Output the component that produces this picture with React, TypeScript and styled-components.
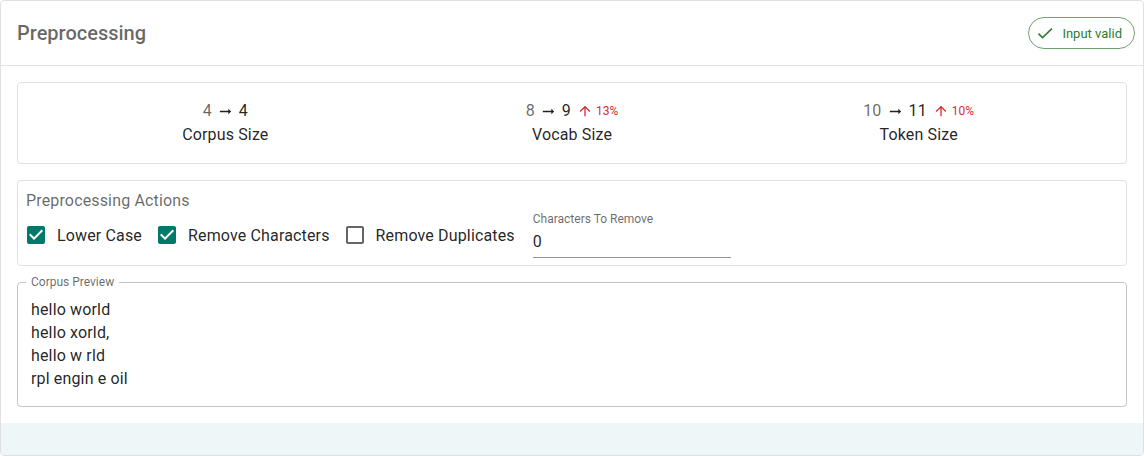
import styled, { createGlobalStyle } from 'styled-components'

const GlobalStyle = createGlobalStyle`
  html, body {
    margin: 0;
    padding: 0;
    background: #fff;
  }
  body {
    font-family: Roboto, "Liberation Sans", Arial, sans-serif;
    color: rgba(0, 0, 0, 0.87);
  }
`

const Panel = styled.div`
  box-sizing: border-box;
  width: 1144px;
  height: 456px;
  border: 1px solid #e0e0e0;
  border-radius: 4px;
  display: flex;
  flex-direction: column;
  overflow: hidden;
`

const Header = styled.div`
  height: 65px;
  box-sizing: border-box;
  padding: 16px 8px 16px 16px;
  display: flex;
  align-items: center;
  justify-content: space-between;
  border-bottom: 1px solid #e0e0e0;
`

const Title = styled.h2`
  margin: 0;
  font-size: 20px;
  font-weight: 500;
  line-height: 32px;
  color: rgba(0, 0, 0, 0.6);
`

const Chip = styled.div`
  height: 32px;
  box-sizing: border-box;
  border: 1px solid rgba(46, 125, 50, 0.7);
  border-radius: 16px;
  display: flex;
  align-items: center;
  padding: 0 12px 0 6px;
  gap: 7px;
  color: #2e7d32;
  font-size: 13px;
`

const Body = styled.div`
  padding: 16px;
  display: flex;
  flex-direction: column;
  gap: 16px;
  letter-spacing: 0.15px;
`

const Card = styled.div`
  border: 1px solid #e0e0e0;
  border-radius: 4px;
`

const StatsGrid = styled(Card)`
  display: grid;
  grid-template-columns: repeat(3, 1fr);
  padding: 16px 34px;
`

const Stat = styled.div`
  display: flex;
  flex-direction: column;
  align-items: center;
  font-size: 16px;
  line-height: 24px;
`

const StatValues = styled.div`
  display: flex;
  align-items: center;
  gap: 5px;
`

const Prev = styled.span`
  color: rgba(0, 0, 0, 0.6);
`

const Change = styled.span`
  display: inline-flex;
  align-items: center;
  gap: 3px;
  color: #d32f2f;
  font-size: 12px;
  letter-spacing: 0;
  margin-left: 1px;
`

const Actions = styled(Card)`
  padding: 8px;
  display: flex;
  flex-direction: column;
`

const SectionTitle = styled.div`
  font-size: 16px;
  line-height: 24px;
  color: rgba(0, 0, 0, 0.6);
`

const ActionRow = styled.div`
  display: flex;
  align-items: center;
  height: 44px;
`

const CheckLabel = styled.label`
  display: inline-flex;
  align-items: center;
  gap: 9px;
  margin-left: -2px;
  margin-right: 15px;
  font-size: 16px;
`

const TextField = styled.div`
  width: 198px;
  display: flex;
  flex-direction: column;
  align-self: flex-start;
  margin-top: -1px;
  margin-left: 3px;
  letter-spacing: 0;
`

const FieldLabel = styled.span`
  font-size: 12px;
  line-height: 14px;
  color: rgba(0, 0, 0, 0.6);
`

const FieldInput = styled.div`
  font-size: 16px;
  line-height: 23px;
  padding: 3.5px 0 4px;
  border-bottom: 1px solid rgba(0, 0, 0, 0.42);
`

const Preview = styled.div`
  position: relative;
  border: 1px solid #c4c4c4;
  border-radius: 4px;
  padding: 14.5px 13px 16.5px;
  font-size: 16px;
  line-height: 23px;
`

const PreviewLegend = styled.span`
  position: absolute;
  top: -8px;
  left: 8px;
  padding: 0 5px;
  background: #fff;
  font-size: 12px;
  line-height: 14px;
  letter-spacing: 0;
  color: rgba(0, 0, 0, 0.6);
`

const Footer = styled.div`
  flex: 1;
  background: #eef6f7;
`

const CheckIcon = () => (
  <svg width="20" height="20" viewBox="0 0 24 24" fill="#2e7d32">
    <path d="M9 16.17 4.83 12l-1.42 1.41L9 19 21 7.59 19.59 6z" />
  </svg>
)

const ArrowUp = () => (
  <svg width="16" height="16" viewBox="0 0 24 24" fill="#d32f2f">
    <path d="M4 12l1.41 1.41L11 7.83V20h2V7.83l5.58 5.59L20 12l-8-8-8 8z" />
  </svg>
)

const ArrowRight = () => (
  <svg width="17" height="17" viewBox="0 0 24 24" fill="rgba(0,0,0,0.87)">
    <path d="M16.01 11H4v2h12.01v3L20 12l-3.99-4z" />
  </svg>
)

const Box = ({ checked }: { checked: boolean }) =>
  checked ? (
    <svg width="24" height="24" viewBox="0 0 24 24" fill="#00796b">
      <path d="M19 3H5c-1.11 0-2 .9-2 2v14c0 1.1.89 2 2 2h14c1.11 0 2-.9 2-2V5c0-1.1-.89-2-2-2zm-9 14l-5-5 1.41-1.41L10 14.17l7.59-7.59L19 8l-9 9z" />
    </svg>
  ) : (
    <svg width="24" height="24" viewBox="0 0 24 24" fill="rgba(0,0,0,0.6)">
      <path d="M19 5v14H5V5h14m0-2H5c-1.1 0-2 .9-2 2v14c0 1.1.9 2 2 2h14c1.1 0 2-.9 2-2V5c0-1.1-.9-2-2-2z" />
    </svg>
  )

const stats = [
  { label: 'Corpus Size', before: 4, after: 4 },
  { label: 'Vocab Size', before: 8, after: 9, change: '13%' },
  { label: 'Token Size', before: 10, after: 11, change: '10%' },
]

const actions = [
  { label: 'Lower Case', checked: true },
  { label: 'Remove Characters', checked: true },
  { label: 'Remove Duplicates', checked: false },
]

const corpus = ['hello world', 'hello xorld,', 'hello w rld', 'rpl engin e oil']

export default function App() {
  return (
    <>
      <GlobalStyle />
      <Panel>
        <Header>
          <Title>Preprocessing</Title>
          <Chip>
            <CheckIcon />
            Input valid
          </Chip>
        </Header>

        <Body>
          <StatsGrid>
            {stats.map((s) => (
              <Stat key={s.label}>
                <StatValues>
                  <Prev>{s.before}</Prev>
                  <ArrowRight />
                  <span>{s.after}</span>
                  {s.change && (
                    <Change>
                      <ArrowUp />
                      {s.change}
                    </Change>
                  )}
                </StatValues>
                <span>{s.label}</span>
              </Stat>
            ))}
          </StatsGrid>

          <Actions>
            <SectionTitle>Preprocessing Actions</SectionTitle>
            <ActionRow>
              {actions.map((a) => (
                <CheckLabel key={a.label}>
                  <Box checked={a.checked} />
                  {a.label}
                </CheckLabel>
              ))}
              <TextField>
                <FieldLabel>Characters To Remove</FieldLabel>
                <FieldInput>0</FieldInput>
              </TextField>
            </ActionRow>
          </Actions>

          <Preview>
            <PreviewLegend>Corpus Preview</PreviewLegend>
            {corpus.map((line) => (
              <div key={line}>{line}</div>
            ))}
          </Preview>
        </Body>

        <Footer />
      </Panel>
    </>
  )
}
